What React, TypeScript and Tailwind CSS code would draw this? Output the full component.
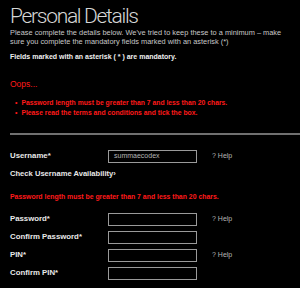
import React from 'react';

const sans = { fontFamily: '"Liberation Sans", Arial, sans-serif' };

const Row = ({ label, value, help }: { label: string; value?: string; help?: boolean }) => (
  <div className="flex items-center h-[18px]">
    <div className="w-[98px] text-[7.8px] font-bold text-[#e8e8e8]">{label}</div>
    <div className="w-[89px] h-[13px] border border-[#9a9a9a] bg-black flex items-center px-[5px] text-[7px] text-[#b5b5b5]">
      {value}
    </div>
    {help && <div className="ml-[15px] text-[7px] text-[#b5b5b5]">? Help</div>}
  </div>
);

export default function App() {
  return (
    <div className="w-[300px] h-[288px] bg-black overflow-hidden pl-[10px]" style={sans}>
      <h1
        className="pt-[4px] text-[21px] leading-[24px] font-light text-[#d6d6d6] tracking-[-1.3px]"
        style={{ fontFamily: 'Roboto, sans-serif' }}
      >
        Personal Details
      </h1>
      <p className="text-[7.4px] leading-[9px] text-[#c8c8c8] pr-[4px]">
        Please complete the details below. We've tried to keep these to a minimum – make sure you complete the mandatory fields marked with an asterisk (*)
      </p>
      <p className="mt-[6px] text-[7px] leading-[9px] font-bold text-[#f0f0f0]">
        Fields marked with an asterisk ( * ) are mandatory.
      </p>
      <p className="mt-[18px] text-[8.5px] leading-[10px] text-[#ff1a1a]">Oops...</p>
      <ul className="mt-[9px] ml-[5px] text-[6.8px] font-bold text-[#ff1a1a] leading-[10px]">
        <li className="flex gap-[4px]"><span>•</span><span>Password length must be greater than 7 and less than 20 chars.</span></li>
        <li className="flex gap-[4px]"><span>•</span><span>Please read the terms and conditions and tick the box.</span></li>
      </ul>
      <div className="mt-[15px] h-[2px] bg-[#707070]" />
      <div className="mt-[12px]">
        <Row label="Username*" value="summaecodex" help />
      </div>
      <div className="mt-[4px] text-[7.6px] leading-[10px] font-bold text-[#e8e8e8]">Check Username Availability›</div>
      <p className="mt-[13px] text-[6.9px] leading-[10px] font-bold text-[#ff1a1a]">
        Password length must be greater than 7 and less than 20 chars.
      </p>
      <div className="mt-[8px]">
        <Row label="Password*" help />
        <Row label="Confirm Password*" />
        <Row label="PIN*" help />
        <Row label="Confirm PIN*" />
      </div>
    </div>
  );
}
